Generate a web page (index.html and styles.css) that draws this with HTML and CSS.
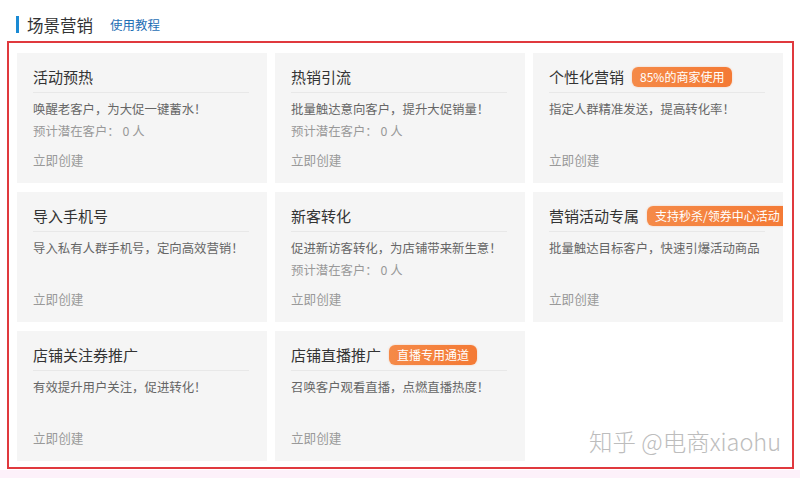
FILE: index.html
```html
<!DOCTYPE html>
<html lang="zh-CN">
<head>
<meta charset="utf-8">
<title>场景营销</title>
<link rel="stylesheet" href="styles.css">
</head>
<body>
<div class="page">
  <div class="header">
    <span class="bar"></span>
    <h2 class="title">场景营销</h2>
    <a class="link" href="#">使用教程</a>
  </div>
  <div class="box">
    <div class="grid">
      <div class="card">
        <div class="card-head"><span class="card-title">活动预热</span></div>
        <p class="desc">唤醒老客户，为大促一键蓄水！</p>
        <p class="meta">预计潜在客户： 0 人</p>
        <a class="action" href="#">立即创建</a>
      </div>
      <div class="card">
        <div class="card-head"><span class="card-title">热销引流</span></div>
        <p class="desc">批量触达意向客户，提升大促销量！</p>
        <p class="meta">预计潜在客户： 0 人</p>
        <a class="action" href="#">立即创建</a>
      </div>
      <div class="card">
        <div class="card-head"><span class="card-title">个性化营销</span><span class="badge">85%的商家使用</span></div>
        <p class="desc">指定人群精准发送，提高转化率！</p>
        <a class="action" href="#">立即创建</a>
      </div>
      <div class="card">
        <div class="card-head"><span class="card-title">导入手机号</span></div>
        <p class="desc">导入私有人群手机号，定向高效营销！</p>
        <a class="action" href="#">立即创建</a>
      </div>
      <div class="card">
        <div class="card-head"><span class="card-title">新客转化</span></div>
        <p class="desc">促进新访客转化，为店铺带来新生意！</p>
        <p class="meta">预计潜在客户： 0 人</p>
        <a class="action" href="#">立即创建</a>
      </div>
      <div class="card">
        <div class="card-head"><span class="card-title">营销活动专属</span><span class="badge">支持秒杀/领券中心活动</span></div>
        <p class="desc">批量触达目标客户，快速引爆活动商品</p>
        <a class="action" href="#">立即创建</a>
      </div>
      <div class="card">
        <div class="card-head"><span class="card-title">店铺关注券推广</span></div>
        <p class="desc">有效提升用户关注，促进转化！</p>
        <a class="action" href="#">立即创建</a>
      </div>
      <div class="card">
        <div class="card-head"><span class="card-title">店铺直播推广</span><span class="badge">直播专用通道</span></div>
        <p class="desc">召唤客户观看直播，点燃直播热度！</p>
        <a class="action" href="#">立即创建</a>
      </div>
    </div>
    <div class="watermark">知乎 @电商xiaohu</div>
  </div>
  <div class="strip"></div>
</div>
</body>
</html>
```

FILE: styles.css
```css
* { box-sizing: border-box; }
html, body { margin: 0; padding: 0; background: #fff; }
body {
  font-family: "Noto Sans CJK SC", "Liberation Sans", sans-serif;
  color: #333;
  width: 800px;
  height: 478px;
  overflow: hidden;
  text-spacing-trim: space-all;
}
.header {
  display: flex;
  align-items: center;
  height: 41px;
  padding-left: 16px;
  padding-top: 11px;
  padding-bottom: 3px;
}
.bar {
  width: 3px;
  height: 17px;
  background: #1a8ad4;
  margin-right: 8px;
}
.title {
  margin: 0;
  font-size: 16.5px;
  font-weight: normal;
  color: #333;
  line-height: 24px;
}
.link {
  margin-left: 17px;
  font-size: 12.5px;
  color: #1f6fb5;
  text-decoration: none;
  line-height: 20px;
}
.box {
  position: relative;
  margin-left: 7px;
  width: 787px;
  height: 428px;
  border: 2px solid #e0393e;
  padding: 10px 9px 6px 8px;
}
.grid {
  display: grid;
  grid-template-columns: repeat(3, 250px);
  grid-auto-rows: 130px;
  column-gap: 8px;
  row-gap: 9px;
}
.card {
  background: #f5f5f5;
  padding: 12px 18px 12px 16px;
  display: flex;
  flex-direction: column;
  overflow: hidden;
}
.card-head {
  display: flex;
  align-items: center;
  height: 28px;
  padding-bottom: 4px;
  border-bottom: 1px solid #e8e8e8;
  white-space: nowrap;
}
.card-title {
  font-size: 15px;
  line-height: 24px;
  color: #333;
}
.badge {
  margin-left: 8px;
  padding: 0 8px;
  height: 20px;
  line-height: 20px;
  border-radius: 6px;
  background: linear-gradient(90deg, #f58a48, #f47a35);
  color: #fff;
  font-size: 12px;
  white-space: nowrap;
  box-shadow: 0 0 2px rgba(245,130,60,0.4);
}
.desc {
  margin: 5px 0 0;
  font-size: 12.4px;
  line-height: 22px;
  color: #666;
}
.meta {
  margin: 0;
  font-size: 12.4px;
  line-height: 22px;
  color: #999;
}
.action {
  margin-top: auto;
  font-size: 12.6px;
  line-height: 22px;
  color: #999;
  text-decoration: none;
}
.watermark {
  position: absolute;
  right: 11px;
  bottom: 11px;
  font-size: 23.5px;
  font-weight: 300;
  line-height: 30px;
  color: #bdbdbd;
  text-shadow: 0 0 1px #fff, 1px 1px 0 #fff;
}
.strip {
  margin-top: 1px;
  height: 8px;
  background: #fdf1fa;
}
```
